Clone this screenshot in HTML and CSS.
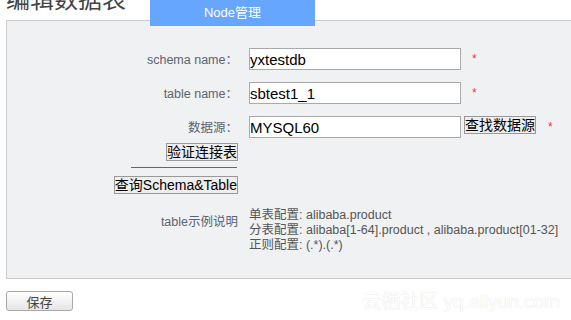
FILE: index.html
```html
<!DOCTYPE html>
<html lang="zh-CN">
<head>
	<meta charset="UTF-8">
	<title>编辑数据表</title>
	<link rel="stylesheet" href="styles.css">
</head>
<body>
	<div class="header">
		<h1 class="title">编辑数据表</h1>
		<div class="tab">Node管理</div>
	</div>
	<div class="panel">
		<div class="row">
			<label class="label">schema name<span class="colon">：</span></label>
			<input class="field" type="text" value="yxtestdb">
			<span class="req">*</span>
		</div>
		<div class="row">
			<label class="label">table name<span class="colon">：</span></label>
			<input class="field" type="text" value="sbtest1_1">
			<span class="req">*</span>
		</div>
		<div class="row row-top">
			<label class="label">数据源<span class="colon">：</span></label>
			<input class="field" type="text" value="MYSQL60">
			<button class="btn btn-find">查找数据源</button>
			<span class="req req-find">*</span>
		</div>
		<div class="actions">
			<button class="btn">验证连接表</button>
			<hr class="sep">
			<button class="btn btn-query">查询Schema&amp;Table</button>
		</div>
		<div class="notes">
			<div class="label note-label">table示例说明</div>
			<div class="note-text">
				<div>单表配置: alibaba.product</div>
				<div>分表配置: alibaba[1-64].product , alibaba.product[01-32]</div>
				<div>正则配置: (.*).(.*)</div>
			</div>
		</div>
	</div>
	<div class="footer">
		<button class="save">保存</button>
		<span class="mark">云栖社区 yq.aliyun.com</span>
	</div>
</body>
</html>
```
FILE: styles.css
```css
*{
	margin: 0;
	padding: 0;
	box-sizing: border-box;
}
body{
	font-family: "Liberation Sans", "Noto Sans CJK SC", sans-serif;
	font-size: 12.5px;
	background: #fff;
	overflow: hidden;
}
.header{
	display: flex;
	height: 20px;
}
.title{
	width: 150px;
	margin-top: -12px;
	padding-left: 6px;
	font-size: 24px;
	line-height: 24px;
	font-weight: normal;
	color: #444;
}
.tab{
	position: relative;
	z-index: 1;
	width: 165px;
	height: 26px;
	line-height: 26px;
	font-size: 13px;
	text-align: center;
	color: #fff;
	background: #66a6ff;
}
.panel{
	margin-left: 6px;
	padding: 27px 0 25px;
	border: 1px solid #ccc;
	border-right: none;
	background: #f0f1f3;
}
.row{
	display: flex;
	align-items: center;
	height: 22px;
	margin-bottom: 12px;
}
.row-top{
	align-items: flex-start;
	margin-bottom: 5px;
}
.label{
	width: 231px;
	text-align: right;
	color: #5c6470;
	line-height: 15px;
}
.colon{
	font-family: "Noto Sans CJK JP", sans-serif;
}
.row-top .label{
	line-height: 22px;
}
.field{
	width: 212px;
	height: 22px;
	margin-left: 11px;
	padding: 0;
	border: 1px solid #aaa;
	background: #fff;
	font-family: "Liberation Sans", "Noto Sans CJK SC", sans-serif;
	font-size: 15px;
	color: #000;
	outline: none;
}
.req{
	margin-left: 11px;
	font-size: 12px;
	color: #f33;
}
.req-find{
	line-height: 22px;
	margin-left: 12px;
}
.btn{
	height: 18px;
	padding: 0;
	border: 1px solid #999;
	background: #eee;
	font-family: "Liberation Sans", "Noto Sans CJK SC", sans-serif;
	font-size: 14px;
	line-height: 16px;
	color: #000;
}
.btn-find{
	margin-left: 3px;
}
.actions{
	display: flex;
	flex-direction: column;
	align-items: flex-end;
	width: 231px;
}
.sep{
	width: 106px;
	height: 1px;
	margin: 6px 1px 0 0;
	border: none;
	background: #666;
}
.btn-query{
	margin-top: 8px;
}
.notes{
	display: flex;
	margin-top: 14px;
}
.note-label{
	padding-top: 7px;
}
.note-text{
	margin-left: 11px;
	line-height: 15px;
	color: #555;
}
.footer{
	display: flex;
	justify-content: space-between;
	align-items: flex-start;
	margin-top: 12px;
}
.save{
	width: 67px;
	height: 20px;
	margin-left: 6px;
	border: 1px solid #aaa;
	border-radius: 3px;
	background: linear-gradient(#fff, #e4e4e4);
	font-family: "Liberation Sans", "Noto Sans CJK SC", sans-serif;
	font-size: 13px;
	color: #444;
}
.mark{
	margin-right: 11px;
	font-size: 19px;
	line-height: 22px;
	color: #fff;
	text-shadow: 0 0 1px rgba(0,0,0,.18);
}
```
